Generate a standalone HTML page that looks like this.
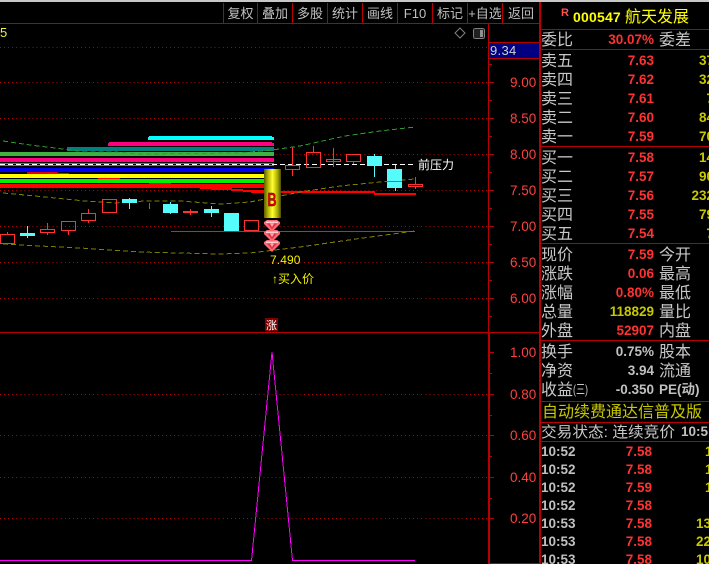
<!DOCTYPE html>
<html lang="zh"><head><meta charset="utf-8"><style>
html,body{margin:0;padding:0;background:#000;width:709px;height:564px;overflow:hidden}
svg{display:block}
text{font-family:"Liberation Sans","WenQuanYi Zen Hei","Noto Sans CJK SC",sans-serif}
.cn{font-size:16px;fill:#c8c8c8}
.tb{font-size:13px;fill:#c0c0c0;text-anchor:middle}
.ax{font-size:13.5px;fill:#ff4040}
.p{font-size:13.5px;font-weight:700;fill:#ff3232;text-anchor:end}
.v{font-size:13.5px;font-weight:700;fill:#c8c800;text-anchor:end}
.g{font-size:13.5px;font-weight:700;fill:#c0c0c0;text-anchor:end}
.t{font-size:13.5px;font-weight:700;fill:#c0c0c0}
.grid{stroke:#b00000;stroke-width:1;stroke-dasharray:1 3.05;fill:none}
.r{fill:none;stroke:#ff3232;stroke-width:1}
.w{stroke:#ff3232;stroke-width:1}
.c{fill:#54fcfc}
.cw{stroke:#54fcfc;stroke-width:1}
.l{stroke:#b80000;stroke-width:1}
</style></head><body>
<svg width="709" height="564" viewBox="0 0 709 564" xmlns="http://www.w3.org/2000/svg" shape-rendering="crispEdges">
<rect width="709" height="564" fill="#000"/>
<rect width="709" height="2" fill="#c8c8c8"/>

<!-- toolbar -->
<g class="l">
<line x1="0" y1="23.5" x2="540" y2="23.5"/>
<line x1="223.5" y1="3" x2="223.5" y2="23"/><line x1="257.5" y1="3" x2="257.5" y2="23"/>
<line x1="292.5" y1="3" x2="292.5" y2="23"/><line x1="327.5" y1="3" x2="327.5" y2="23"/>
<line x1="362.5" y1="3" x2="362.5" y2="23"/><line x1="397.5" y1="3" x2="397.5" y2="23"/>
<line x1="432.5" y1="3" x2="432.5" y2="23"/><line x1="467.5" y1="3" x2="467.5" y2="23"/>
<line x1="502.5" y1="3" x2="502.5" y2="23"/>
</g>
<g class="tb">
<text x="240.5" y="18" class="tb">复权</text><text x="275" y="18" class="tb">叠加</text>
<text x="310" y="18" class="tb">多股</text><text x="345" y="18" class="tb">统计</text>
<text x="380" y="18" class="tb">画线</text><text x="415" y="18" class="tb">F10</text>
<text x="450" y="18" class="tb">标记</text><text x="485" y="18" class="tb">+自选</text>
<text x="521" y="18" class="tb">返回</text>
</g>
<text x="0" y="37" style="font-size:13px;fill:#f0f040">5</text>
<path d="M460 28l5 5-5 5-5-5z" fill="none" stroke="#808080" shape-rendering="auto"/>
<rect x="473.5" y="28.5" width="11" height="10" rx="2" fill="#202020" stroke="#808080"/>
<rect x="480" y="30" width="3" height="7" fill="#909090"/>

<!-- grid -->
<g class="grid">
<line x1="0" y1="47.5" x2="488" y2="47.5"/><line x1="0" y1="82.5" x2="488" y2="82.5"/>
<line x1="0" y1="118.5" x2="488" y2="118.5"/><line x1="0" y1="154.5" x2="488" y2="154.5"/>
<line x1="0" y1="190.5" x2="488" y2="190.5"/><line x1="0" y1="226.5" x2="488" y2="226.5"/>
<line x1="0" y1="262.5" x2="488" y2="262.5"/><line x1="0" y1="298.5" x2="488" y2="298.5"/>
<line x1="0" y1="394.5" x2="488" y2="394.5"/><line x1="0" y1="435.5" x2="488" y2="435.5"/>
<line x1="0" y1="477.5" x2="488" y2="477.5"/><line x1="0" y1="518.5" x2="488" y2="518.5"/>
</g>

<!-- ribbons -->
<rect x="149" y="136" width="123" height="1" fill="#00ffff"/>
<rect x="148" y="137" width="126" height="3" fill="#00ffff"/>
<rect x="109" y="142" width="163" height="1" fill="#ff0080"/>
<rect x="108" y="143" width="166" height="3" fill="#ff0080"/>
<rect x="67" y="147" width="207" height="4" fill="#008080"/>
<rect x="0" y="152" width="274" height="4" fill="#40b040"/>
<rect x="0" y="158" width="274" height="4" fill="#ff0080"/>
<rect x="0" y="163" width="274" height="1" fill="#808040"/>
<rect x="0" y="165" width="274" height="1" fill="#808040"/>
<rect x="0" y="168" width="274" height="4" fill="#0000f0"/>
<rect x="0" y="174" width="274" height="4" fill="#ffff00"/>
<rect x="0" y="179" width="274" height="4" fill="#00f000"/>
<rect x="0" y="184" width="274" height="4" fill="#ff0000"/>
<rect x="27" y="172" width="31" height="2" fill="#e00000"/>
<rect x="47" y="173" width="22" height="1" fill="#ff0000"/>
<rect x="98" y="178" width="22" height="1" fill="#ff0000"/>
<rect x="149" y="183" width="22" height="1" fill="#ff0000"/>
<rect x="200" y="188" width="32" height="1" fill="#ff0000"/>
<rect x="211" y="188" width="21" height="2" fill="#ff0000"/>
<rect x="231" y="189" width="12" height="2" fill="#ff0000"/>
<rect x="243" y="190" width="21" height="2" fill="#ff0000"/>
<rect x="251" y="191" width="124" height="2" fill="#ff0000"/>
<rect x="374" y="193" width="42" height="2" fill="#ff0000"/>
<rect x="171" y="231" width="244" height="1" fill="#e02020"/>

<!-- curves -->
<g fill="none" stroke-dasharray="5 3">
<polyline points="3,141 30,145 55,148 85,152 115,152 140,154 240,153 272,150 300,146 345,136 380,131 415,127" stroke="#2f9a2f"/>
<polyline points="3,193 25,195 55,198 85,201 115,203 145,201 180,201 220,204 250,202 300,192 340,186 380,182 415,179" stroke="#808000"/>
<polyline points="3,244 40,246 80,248 140,252 220,254 250,253 300,247 363,238 415,231" stroke="#808000"/>
</g>

<!-- dashed pressure line -->
<line x1="0" y1="164.5" x2="415" y2="164.5" stroke="#fff" stroke-dasharray="5 3"/>
<text x="418" y="169" style="font-size:12px;fill:#fff">前压力</text>

<!-- candles -->
<g>
<line class="w" x1="7.5" y1="232" x2="7.5" y2="234"/><rect class="r" x="0.5" y="234.5" width="14" height="9"/>
<line class="cw" x1="27.5" y1="226" x2="27.5" y2="238"/><rect class="c" x="20" y="233" width="15" height="3"/>
<line class="w" x1="47.5" y1="223" x2="47.5" y2="235"/><rect class="r" x="40.5" y="229.5" width="14" height="3" style="fill:#000"/>
<line class="w" x1="68.5" y1="231" x2="68.5" y2="235"/><rect class="r" x="61.5" y="221.5" width="14" height="9"/>
<line class="w" x1="88.5" y1="209" x2="88.5" y2="213"/><line class="w" x1="88.5" y1="221" x2="88.5" y2="223"/><rect class="r" x="81.5" y="213.5" width="14" height="7"/>
<rect class="r" x="102.5" y="199.5" width="14" height="13"/>
<line class="cw" x1="129.5" y1="198" x2="129.5" y2="209"/><rect class="c" x="122" y="199" width="15" height="4"/>
<line class="w" x1="149.5" y1="203" x2="149.5" y2="209"/>
<line class="cw" x1="170.5" y1="202" x2="170.5" y2="214"/><rect class="c" x="163" y="204" width="15" height="9"/>
<line class="w" x1="190.5" y1="209" x2="190.5" y2="215"/><rect x="183" y="211" width="15" height="2" fill="#ff3232"/>
<line class="cw" x1="211.5" y1="206" x2="211.5" y2="217"/><rect class="c" x="204" y="209" width="15" height="4"/>
<rect class="c" x="224" y="213" width="15" height="18"/>
<rect class="r" x="244.5" y="220.5" width="14" height="10" style="fill:#000"/>
<line class="w" x1="292.5" y1="147" x2="292.5" y2="165"/><line class="w" x1="292.5" y1="170" x2="292.5" y2="176"/><rect class="r" x="285.5" y="165.5" width="14" height="4"/>
<line class="w" x1="313.5" y1="146" x2="313.5" y2="152"/><rect class="r" x="306.5" y="152.5" width="14" height="15"/>
<line class="w" x1="333.5" y1="148" x2="333.5" y2="167"/><rect class="r" x="326.5" y="159.5" width="14" height="2"/>
<line class="w" x1="353.5" y1="162" x2="353.5" y2="164"/><rect class="r" x="346.5" y="154.5" width="14" height="7"/>
<line class="cw" x1="374.5" y1="154" x2="374.5" y2="177"/><rect class="c" x="367" y="156" width="15" height="10"/>
<line class="cw" x1="395.5" y1="165" x2="395.5" y2="191"/><rect class="c" x="387" y="169" width="15" height="19"/>
<line x1="387" y1="181.5" x2="402" y2="181.5" stroke="#808000"/>
<line class="w" x1="415.5" y1="177" x2="415.5" y2="189"/><rect class="r" x="408.5" y="184.5" width="14" height="2" style="fill:#000"/>
</g>

<!-- gold column -->
<defs><linearGradient id="gold" x1="0" x2="1" y1="0" y2="0">
<stop offset="0" stop-color="#5c5c00"/><stop offset=".2" stop-color="#a8a800"/><stop offset=".5" stop-color="#ffff30"/><stop offset=".8" stop-color="#a8a800"/><stop offset="1" stop-color="#4c4c00"/>
</linearGradient>
<g id="gem" shape-rendering="auto"><path d="M-8 2L-5 0H5L8 2V4L0 12L-8 4Z" fill="#ff6878"/><path d="M-6 1.5H6V3H-6Z" fill="#ffd0d0"/><path d="M-5 3.5H5L0 9.5Z" fill="#e03848"/><path d="M-2 3.5H2L0 7Z" fill="#ffb0b0"/></g></defs>
<rect x="264" y="169" width="17" height="49" fill="url(#gold)"/>
<text x="267.5" y="206" textLength="9" lengthAdjust="spacingAndGlyphs" style="font-size:18px;font-weight:700;fill:#e00000;stroke:#600000;stroke-width:.4">B</text>
<use href="#gem" x="272" y="220"/><use href="#gem" x="272" y="230"/><use href="#gem" x="272" y="240"/>
<text x="270" y="264" style="font-size:12px;fill:#f0f000;letter-spacing:.1px">7.490</text>
<text x="272" y="283" style="font-size:12px;fill:#f0f000">↑买入价</text>

<!-- axis -->
<g class="l">
<line x1="488.5" y1="23" x2="488.5" y2="332"/>
<line x1="539.5" y1="2" x2="539.5" y2="564"/>
<line x1="540.5" y1="2" x2="540.5" y2="564"/>
<line x1="489" y1="82.5" x2="494" y2="82.5"/><line x1="489" y1="118.5" x2="494" y2="118.5"/>
<line x1="489" y1="154.5" x2="494" y2="154.5"/><line x1="489" y1="190.5" x2="494" y2="190.5"/>
<line x1="489" y1="226.5" x2="494" y2="226.5"/><line x1="489" y1="262.5" x2="494" y2="262.5"/>
<line x1="489" y1="298.5" x2="494" y2="298.5"/>
<line x1="489" y1="64.5" x2="492" y2="64.5"/><line x1="489" y1="100.5" x2="492" y2="100.5"/>
<line x1="489" y1="136.5" x2="492" y2="136.5"/><line x1="489" y1="172.5" x2="492" y2="172.5"/>
<line x1="489" y1="208.5" x2="492" y2="208.5"/><line x1="489" y1="244.5" x2="492" y2="244.5"/>
<line x1="489" y1="280.5" x2="492" y2="280.5"/><line x1="489" y1="316.5" x2="492" y2="316.5"/>
</g>
<rect x="489" y="42" width="50" height="16" fill="#000080"/>
<path d="M489 42.5H539M489 58.5H539" stroke="#b80000"/>
<text x="490" y="55" style="font-size:13px;fill:#d0d0d0;letter-spacing:.3px">9.34</text>
<g class="ax">
<text x="510" y="87" class="ax">9.00</text><text x="510" y="123" class="ax">8.50</text>
<text x="510" y="159" class="ax">8.00</text><text x="510" y="195" class="ax">7.50</text>
<text x="510" y="231" class="ax">7.00</text><text x="510" y="267" class="ax">6.50</text>
<text x="510" y="303" class="ax">6.00</text>
<text x="510" y="357" class="ax">1.00</text><text x="510" y="399" class="ax">0.80</text>
<text x="510" y="440" class="ax">0.60</text><text x="510" y="482" class="ax">0.40</text>
<text x="510" y="523" class="ax">0.20</text>
</g>

<!-- sub chart -->
<line x1="0" y1="332.5" x2="540" y2="332.5" stroke="#b80000"/>
<rect x="488" y="333" width="2" height="231" fill="#b80000"/>
<rect x="490" y="563" width="49" height="1" fill="#b80000"/>
<g class="l">
<line x1="490" y1="352.5" x2="494" y2="352.5"/><line x1="490" y1="394.5" x2="494" y2="394.5"/>
<line x1="490" y1="435.5" x2="494" y2="435.5"/><line x1="490" y1="477.5" x2="494" y2="477.5"/>
<line x1="490" y1="518.5" x2="494" y2="518.5"/>
<line x1="490" y1="373.5" x2="492" y2="373.5"/><line x1="490" y1="415.5" x2="492" y2="415.5"/>
<line x1="490" y1="456.5" x2="492" y2="456.5"/><line x1="490" y1="498.5" x2="492" y2="498.5"/>
</g>
<rect x="265" y="318" width="13" height="13" fill="#800000"/>
<text x="271.5" y="329" style="font-size:11px;fill:#fff;text-anchor:middle">涨</text>
<polyline points="0,560.5 251.5,560.5 272,352 292.5,560.5 415,560.5" fill="none" stroke="#ff00ff" stroke-width="1"/>

<!-- right panel lines -->
<g class="l">
<line x1="541" y1="29.5" x2="709" y2="29.5"/><line x1="541" y1="49.5" x2="709" y2="49.5"/>
<line x1="541" y1="146.5" x2="709" y2="146.5"/><line x1="541" y1="243.5" x2="709" y2="243.5"/>
<line x1="541" y1="340.5" x2="709" y2="340.5"/><line x1="541" y1="401.5" x2="709" y2="401.5"/>
<line x1="541" y1="422.5" x2="709" y2="422.5"/><line x1="541" y1="441.5" x2="709" y2="441.5"/>
</g>
<text x="561" y="16" style="font-size:11px;font-weight:700;fill:#ff5050">R</text>
<text x="573" y="22" style="font-size:14px;font-weight:700;fill:#ffff00;letter-spacing:.2px">000547</text>
<text x="625" y="22" style="font-size:16px;fill:#ffff00">航天发展</text>

<text x="541" y="45" class="cn">委比</text><text x="654" y="44" class="p">30.07%</text><text x="659" y="45" class="cn">委差</text>

<text x="541" y="66" class="cn">卖五</text><text x="654" y="65" class="p">7.63</text><text x="714" y="65" class="v">37</text>
<text x="541" y="85" class="cn">卖四</text><text x="654" y="84" class="p">7.62</text><text x="714" y="84" class="v">32</text>
<text x="541" y="104" class="cn">卖三</text><text x="654" y="103" class="p">7.61</text><text x="714" y="103" class="v">7</text>
<text x="541" y="123" class="cn">卖二</text><text x="654" y="122" class="p">7.60</text><text x="714" y="122" class="v">84</text>
<text x="541" y="142" class="cn">卖一</text><text x="654" y="141" class="p">7.59</text><text x="714" y="141" class="v">70</text>

<text x="541" y="163" class="cn">买一</text><text x="654" y="162" class="p">7.58</text><text x="714" y="162" class="v">14</text>
<text x="541" y="182" class="cn">买二</text><text x="654" y="181" class="p">7.57</text><text x="714" y="181" class="v">90</text>
<text x="541" y="201" class="cn">买三</text><text x="654" y="200" class="p">7.56</text><text x="714" y="200" class="v">232</text>
<text x="541" y="220" class="cn">买四</text><text x="654" y="219" class="p">7.55</text><text x="714" y="219" class="v">79</text>
<text x="541" y="239" class="cn">买五</text><text x="654" y="238" class="p">7.54</text><text x="714" y="238" class="v">7</text>

<text x="541" y="260" class="cn">现价</text><text x="654" y="259" class="p">7.59</text><text x="659" y="260" class="cn">今开</text>
<text x="541" y="279" class="cn">涨跌</text><text x="654" y="278" class="p">0.06</text><text x="659" y="279" class="cn">最高</text>
<text x="541" y="298" class="cn">涨幅</text><text x="654" y="297" class="p">0.80%</text><text x="659" y="298" class="cn">最低</text>
<text x="541" y="317" class="cn">总量</text><text x="654" y="316" class="v">118829</text><text x="659" y="317" class="cn">量比</text>
<text x="541" y="336" class="cn">外盘</text><text x="654" y="335" class="p">52907</text><text x="659" y="336" class="cn">内盘</text>

<text x="541" y="357" class="cn">换手</text><text x="654" y="356" class="g">0.75%</text><text x="659" y="357" class="cn">股本</text>
<text x="541" y="376" class="cn">净资</text><text x="654" y="375" class="g">3.94</text><text x="659" y="376" class="cn">流通</text>
<text x="541" y="395" class="cn">收益</text><text x="573" y="394" textLength="15" lengthAdjust="spacingAndGlyphs" style="font-size:13px;fill:#c8c8c8">(三)</text><text x="654" y="394" class="g">-0.350</text><text x="659" y="394" style="font-size:13.5px;font-weight:700;fill:#c0c0c0">PE(动)</text>

<text x="542" y="417" style="font-size:16px;fill:#c8c800">自动续费通达信普及版</text>
<text x="541" y="437" textLength="134" lengthAdjust="spacingAndGlyphs" style="font-size:15px;fill:#c8c8c8">交易状态: 连续竞价</text><text x="681" y="436" class="t">10:5</text>

<text x="541" y="456" class="t">10:52</text><text x="652" y="456" class="p">7.58</text><text x="705" y="456" class="v" style="text-anchor:start">1</text>
<text x="541" y="474" class="t">10:52</text><text x="652" y="474" class="p">7.58</text><text x="705" y="474" class="v" style="text-anchor:start">1</text>
<text x="541" y="492" class="t">10:52</text><text x="652" y="492" class="p">7.59</text><text x="705" y="492" class="v" style="text-anchor:start">1</text>
<text x="541" y="510" class="t">10:52</text><text x="652" y="510" class="p">7.58</text>
<text x="541" y="528" class="t">10:53</text><text x="652" y="528" class="p">7.58</text><text x="696" y="528" class="v" style="text-anchor:start">13</text>
<text x="541" y="546" class="t">10:53</text><text x="652" y="546" class="p">7.58</text><text x="696" y="546" class="v" style="text-anchor:start">22</text>
<text x="541" y="564" class="t">10:53</text><text x="652" y="564" class="p">7.58</text><text x="696" y="564" class="v" style="text-anchor:start">10</text>
</svg>
</body></html>
